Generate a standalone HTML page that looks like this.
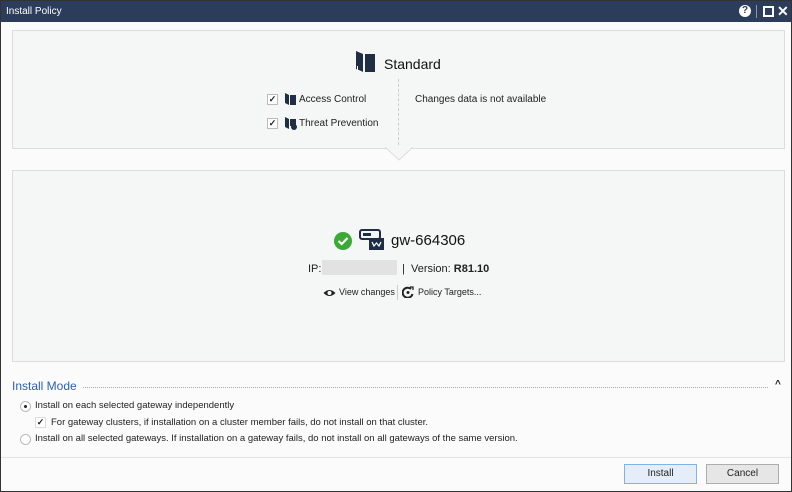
<!DOCTYPE html>
<html><head><style>
body{margin:0;width:792px;height:492px;overflow:hidden;font-family:"Liberation Sans",sans-serif;color:#222;background:#fff;position:relative}
.win{position:absolute;left:0;top:0;width:790px;height:490px;border:1px solid #333;background:#fbfbfb}
.title{position:absolute;left:0;top:0;width:790px;height:21px;background:#2b3d5a;color:#fff;font-size:10px;line-height:21px}
.p{position:absolute;background:#f5f6f6;border:1px solid #dcdcdc}
.t{position:absolute;font-size:10px;white-space:nowrap}
.cb{position:absolute;width:9px;height:9px;border:1px solid #bbb;background:#fff;font-size:9px;line-height:9px;text-align:center;font-weight:bold}
.btn{position:absolute;height:18px;border:1px solid #adadad;background:#e6e6e6;font-size:10px;line-height:18px;text-align:center}
</style></head><body><div class="win">
<div class="title"><span style="margin-left:5px">Install Policy</span>
<div style="position:absolute;left:738px;top:4px;width:12px;height:12px;border-radius:50%;background:#fff;color:#2b3d5a;font-size:10px;font-weight:bold;line-height:12px;text-align:center">?</div>
<div style="position:absolute;left:755px;top:4px;width:1px;height:13px;background:#8a97ab"></div>
<div style="position:absolute;left:762px;top:5px;width:7px;height:7px;border:2px solid #fff"></div>
<div style="position:absolute;left:776px;top:0;font-size:14px;font-weight:bold">✕</div>
</div>
<div class="p" style="left:11px;top:29px;width:771px;height:117px"></div>
<svg style="position:absolute;left:384px;top:146px" width="30" height="16"><path d="M0 0 L14 13 L28 0" fill="#f5f6f6" stroke="#dcdcdc"/></svg>
<svg style="position:absolute;left:354px;top:50px" width="24" height="22"><path d="M1 0 L8 3 L8 21 L1 18Z" fill="#1f2e45"/><path d="M2.5 15 L2.5 19 L7 21" stroke="#fff" fill="none"/><rect x="10" y="3" width="10" height="18" fill="#1f2e45"/></svg>
<div class="t" style="left:383px;top:55px;font-size:14px;color:#111">Standard</div>
<div style="position:absolute;left:397px;top:78px;height:66px;border-left:1px dashed #ccc"></div>
<div class="cb" style="left:266px;top:93px">✓</div>
<svg style="position:absolute;left:283px;top:92px" width="13" height="12"><path d="M1 0 L5 2 L5 12 L1 10Z" fill="#1f2e45"/><rect x="6" y="2" width="6" height="10" fill="#1f2e45"/></svg>
<div class="t" style="left:298px;top:93px">Access Control</div>
<div class="cb" style="left:266px;top:117px">✓</div>
<svg style="position:absolute;left:283px;top:116px" width="13" height="13"><path d="M1 0 L5 2 L5 12 L1 10Z" fill="#1f2e45"/><rect x="6" y="2" width="6" height="7" fill="#1f2e45"/><circle cx="10" cy="10" r="3" fill="#1f2e45"/></svg>
<div class="t" style="left:298px;top:117px">Threat Prevention</div>
<div class="t" style="left:414px;top:93px">Changes data is not available</div>
<div class="p" style="left:11px;top:169px;width:771px;height:190px"></div>
<svg style="position:absolute;left:332px;top:230px" width="20" height="20"><circle cx="10" cy="10" r="9" fill="#3aaa35"/><path d="M5.5 10 L8.7 13 L14.5 7" stroke="#fff" stroke-width="2.2" fill="none"/></svg>
<svg style="position:absolute;left:358px;top:228px" width="26" height="22"><rect x="1" y="1" width="20" height="9" rx="2" fill="none" stroke="#1f2e45" stroke-width="2"/><rect x="4" y="4" width="8" height="3" fill="#1f2e45"/><rect x="10" y="9" width="15" height="12" fill="#1f2e45"/><path d="M13 13 L15 17 L17.5 14 L20 17 L22 13" stroke="#fff" fill="none" stroke-width="1.3"/></svg>
<div class="t" style="left:390px;top:231px;font-size:15px;color:#111">gw-664306</div>
<div class="t" style="left:307px;top:262px;font-size:11px">IP:</div>
<div style="position:absolute;left:321px;top:259px;width:75px;height:15px;background:#e2e2e2"></div>
<div class="t" style="left:401px;top:262px;font-size:11px">| &nbsp;Version: <b>R81.10</b></div>
<svg style="position:absolute;left:322px;top:287px" width="13" height="10"><path d="M0.5 5 Q6.5 -1 12.5 5 Q6.5 11 0.5 5Z" fill="#222"/><circle cx="6.5" cy="5" r="2" fill="#fff"/></svg>
<div class="t" style="left:338px;top:286px;font-size:9px">View changes</div>
<div style="position:absolute;left:396px;top:284px;width:1px;height:15px;background:#ccc"></div>
<svg style="position:absolute;left:401px;top:285px" width="12" height="12"><path d="M9 3 A5 5 0 1 0 10.5 8" stroke="#222" stroke-width="2" fill="none"/><circle cx="6" cy="6.5" r="1.5" fill="#222"/><path d="M8 1 L11 1 L11 4" stroke="#222" fill="none" stroke-width="1.3"/></svg>
<div class="t" style="left:417px;top:286px;font-size:9px">Policy Targets...</div>
<div class="t" style="left:11px;top:378px;font-size:12px;color:#2d5fb2">Install Mode</div>
<div style="position:absolute;left:82px;top:386px;width:685px;border-top:1px dotted #aab"></div>
<div class="t" style="left:774px;top:378px;font-size:10px;font-weight:bold">^</div>
<div style="position:absolute;left:19px;top:400px;width:9px;height:9px;border:1px solid #bbb;border-radius:50%;background:#fff"><div style="width:3px;height:3px;background:#222;border-radius:50%;margin:3px"></div></div>
<div class="t" style="left:34px;top:399px;font-size:9.5px">Install on each selected gateway independently</div>
<div class="cb" style="left:34px;top:416px;border-color:#ddd">✓</div>
<div class="t" style="left:50px;top:416px;font-size:9.5px">For gateway clusters, if installation on a cluster member fails, do not install on that cluster.</div>
<div style="position:absolute;left:19px;top:433px;width:9px;height:9px;border:1px solid #bbb;border-radius:50%;background:#fff"></div>
<div class="t" style="left:34px;top:432px;font-size:9.5px">Install on all selected gateways. If installation on a gateway fails, do not install on all gateways of the same version.</div>
<div style="position:absolute;left:0;top:456px;width:790px;border-top:1px solid #e4e4e4"></div>
<div class="btn" style="left:623px;top:463px;width:71px;border-color:#7eb4ea;background:#e5eef8">Install</div>
<div class="btn" style="left:705px;top:463px;width:71px">Cancel</div>
</div></body></html>
